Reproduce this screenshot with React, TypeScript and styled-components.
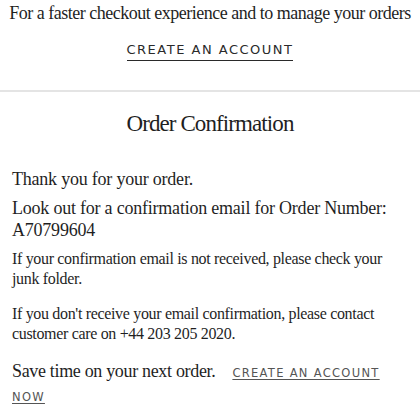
import React from "react";
import styled, { createGlobalStyle } from "styled-components";

const GlobalStyle = createGlobalStyle`
  html, body {
    margin: 0;
    padding: 0;
    background: #ffffff;
  }
  body {
    font-family: "Liberation Serif", "DejaVu Serif", serif;
    color: #1f1f1f;
    overflow: hidden;
  }
`;

export default function App() {
  return (
    <>
      <GlobalStyle />
      <Page>
        <AccountPrompt>
          <PromptText>
            For a faster checkout experience and to manage your orders
          </PromptText>
          <CapsLink href="#">CREATE AN ACCOUNT</CapsLink>
        </AccountPrompt>

        <Divider />

        <Confirmation>
          <Title>Order Confirmation</Title>
          <Lead>Thank you for your order.</Lead>
          <Lead>
            Look out for a confirmation email for Order Number: A70799604
          </Lead>
          <Note>
            If your confirmation email is not received, please check your junk
            folder.
          </Note>
          <Note $gap={15}>
            If you don't receive your email confirmation, please contact
            customer care on +44 203 205 2020.
          </Note>
          <SaveLine>
            Save time on your next order.
            <InlineLink href="#">CREATE AN ACCOUNT NOW</InlineLink>
          </SaveLine>
        </Confirmation>
      </Page>
    </>
  );
}

const Page = styled.div`
  width: 420px;
  height: 420px;
  overflow: hidden;
`;

const AccountPrompt = styled.section`
  display: flex;
  flex-direction: column;
  align-items: center;
  padding: 1px 4px 29px;
`;

const PromptText = styled.p`
  margin: 0;
  font-size: 18px;
  line-height: 24px;
  letter-spacing: -0.5px;
  white-space: nowrap;
  text-align: center;
`;

const CapsLink = styled.a`
  margin-top: 16px;
  font-family: "DejaVu Sans", "Liberation Sans", sans-serif;
  font-size: 13px;
  line-height: 17px;
  letter-spacing: 1.5px;
  color: #2a2a2a;
  text-decoration: none;
  padding-bottom: 2px;
  border-bottom: 1px solid #2a2a2a;
`;

const Divider = styled.hr`
  margin: 0;
  border: none;
  height: 2px;
  background: #e4e4e4;
`;

const Confirmation = styled.section`
  padding: 18px 12px 0;
`;

const Title = styled.h1`
  margin: 0 0 30px;
  font-size: 23px;
  line-height: 28px;
  letter-spacing: -0.9px;
  font-weight: normal;
  text-align: center;
`;

const Lead = styled.p`
  margin: 0 0 7px;
  font-size: 18px;
  line-height: 22px;
  letter-spacing: -0.22px;
`;

const Note = styled.p<{ $gap?: number }>`
  margin: ${(p) => p.$gap ?? 8}px 0 0;
  font-size: 16px;
  line-height: 20px;
  letter-spacing: -0.33px;
`;

const SaveLine = styled.p`
  margin: 16px 0 0;
  font-size: 18px;
  line-height: 22px;
  letter-spacing: -0.33px;
`;

const InlineLink = styled.a`
  margin-left: 17px;
  font-family: "DejaVu Sans", "Liberation Sans", sans-serif;
  font-size: 11.5px;
  letter-spacing: 1.3px;
  color: #555;
  text-decoration: underline;
  text-underline-offset: 2px;
`;
